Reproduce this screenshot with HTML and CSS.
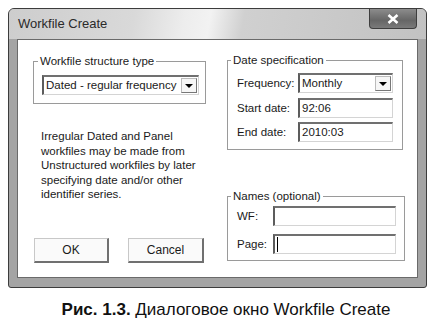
FILE: index.html
```html
<!DOCTYPE html>
<html lang="ru">
<head>
<meta charset="UTF-8">
<title>Workfile Create</title>
<link rel="stylesheet" href="styles.css">
</head>
<body>
<div class="window">
    <div class="titlebar">
        <span class="title">Workfile Create</span>
        <span class="close">
            <svg width="12" height="10" viewBox="0 0 12 10"><path d="M1.5 1 L10.5 9 M10.5 1 L1.5 9" stroke="#fff" stroke-width="2.6" fill="none"/></svg>
        </span>
    </div>
    <div class="content">
        <div class="col-left">
            <fieldset class="group group-type">
                <legend>Workfile structure type</legend>
                <div class="field select">Dated - regular frequency<span class="arrow"></span></div>
            </fieldset>
            <p class="note">Irregular Dated and Panel<br>workfiles may be made from<br>Unstructured workfiles by later<br>specifying date and/or other<br>identifier series.</p>
            <div class="buttons">
                <div class="btn btn-ok">OK</div>
                <div class="btn btn-cancel">Cancel</div>
            </div>
        </div>
        <div class="col-right">
            <fieldset class="group group-date">
                <legend>Date specification</legend>
                <div class="row">
                    <span class="label">Frequency:</span>
                    <div class="field select">Monthly<span class="arrow"></span></div>
                </div>
                <div class="row">
                    <span class="label">Start date:</span>
                    <div class="field">92:06</div>
                </div>
                <div class="row">
                    <span class="label">End date:</span>
                    <div class="field">2010:03</div>
                </div>
            </fieldset>
            <fieldset class="group group-names">
                <legend>Names (optional)</legend>
                <div class="row">
                    <span class="label">WF:</span>
                    <div class="field"></div>
                </div>
                <div class="row">
                    <span class="label">Page:</span>
                    <div class="field"><span class="caret"></span></div>
                </div>
            </fieldset>
        </div>
    </div>
</div>
<p class="caption"><b>Рис. 1.3.</b> Диалоговое окно Workfile Create</p>
</body>
</html>
```

FILE: styles.css
```css
body {
    margin: 0;
    background: #fff;
    font-family: "Liberation Sans", Arial, sans-serif;
    color: #1a1a1a;
}
.window {
    width: 419px;
    height: 280px;
    margin: 8px 0 0 8px;
    box-sizing: border-box;
    border: 1px solid #3c3c3c;
    border-radius: 6px 6px 3px 3px;
    background: #a4a4a4;
    display: flex;
    flex-direction: column;
}
.titlebar {
    height: 30px;
    flex: none;
    display: flex;
    align-items: flex-start;
    justify-content: space-between;
    padding-left: 9px;
    border-radius: 5px 5px 0 0;
    background: linear-gradient(100deg, #cdcdcd 0%, #d9d9d9 30%, #ededed 42%, #f2f2f2 48%, #d0d0d0 56%, #c2c2c2 100%);
}
.title {
    font-size: 13px;
    line-height: 30px;
    color: #2a2a2a;
}
.close {
    width: 48px;
    height: 20px;
    margin-right: 9px;
    box-sizing: border-box;
    border: 1px solid #3e3e3e;
    border-top: none;
    border-radius: 0 0 4px 4px;
    background: linear-gradient(#8c8c8c, #666 60%, #7a7a7a);
    display: flex;
    align-items: center;
    justify-content: center;
}
.content {
    flex: 1;
    margin: 0 8px 9px 8px;
    border: 1px solid #6a6a6a;
    background: #fff;
    display: flex;
    gap: 21px;
    padding: 0 0 14px 15px;
    font-size: 11.5px;
}
.col-left {
    width: 173px;
    display: flex;
    flex-direction: column;
}
.col-right {
    width: 178px;
}
.group {
    margin: 0;
    border: 1px solid #9a9a9a;
    box-sizing: border-box;
}
.group legend {
    padding: 0 2px;
    margin-left: -6px;
    line-height: 14px;
}
.group-type {
    margin-top: 14px;
    padding: 7px 6px 8px 8px;
}
.group-type legend { margin-left: -4px; }
.group-date {
    width: 176px;
    margin-top: 13px;
    padding: 6px 9px 7px 9px;
    display: flex;
    flex-direction: column;
    gap: 4.5px;
}
.group-names {
    margin-top: 39px;
    padding: 3px 8px 6px 9px;
    display: flex;
    flex-direction: column;
    gap: 8px;
}
.row {
    display: flex;
    align-items: center;
}
.group-date .label { width: 61px; }
.group-names .label { width: 36px; }
.field {
    position: relative;
    height: 20px;
    box-sizing: border-box;
    flex: 1;
    border-top: 2px solid #707070;
    border-left: 2px solid #5c5c5c;
    border-right: 1px solid #d4d4d4;
    border-bottom: 1px solid #d4d4d4;
    background: #fff;
    padding-left: 2px;
    line-height: 17px;
    white-space: nowrap;
}
.group-date .field { flex: none; width: 95px; }
.arrow {
    position: absolute;
    right: 1px;
    top: 1px;
    width: 16px;
    height: 15px;
    box-sizing: border-box;
    border: 1px solid #bbb;
    border-right-color: #777;
    border-bottom-color: #777;
    background: #f6f6f6;
}
.arrow::after {
    content: "";
    position: absolute;
    left: 3px;
    top: 5px;
    border-left: 4px solid transparent;
    border-right: 4px solid transparent;
    border-top: 4px solid #000;
}
.caret {
    position: absolute;
    left: 2px;
    top: 1px;
    width: 1px;
    height: 15px;
    background: #000;
}
.note {
    margin: 25px 0 0 8px;
    line-height: 14.5px;
}
.buttons {
    margin-top: auto;
    display: flex;
    gap: 19px;
    padding-left: 1px;
}
.btn {
    height: 25px;
    box-sizing: border-box;
    border: 1px solid #c8c8c8;
    border-right: 2px solid #707070;
    border-bottom: 2px solid #707070;
    background: #fafafa;
    text-align: center;
    line-height: 22px;
    font-size: 12px;
}
.btn-ok { width: 75px; }
.btn-cancel { width: 76px; }
.caption {
    margin: 12px 0 0 0;
    padding-left: 12px;
    text-align: center;
    font-size: 17px;
    line-height: 20px;
    color: #111;
}
```
